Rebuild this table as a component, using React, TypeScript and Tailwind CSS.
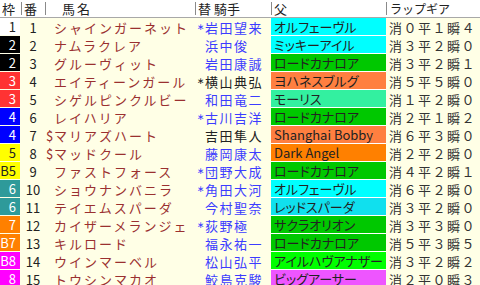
const COLS = "grid grid-cols-[21px_24px_150px_76px_115px_94px]";

type Row = {
  waku: string; wc: string; no: number; mark?: string; name: string;
  star?: boolean; jockey: string; jc: string; sire: string; sc: string; lap: string;
};

const W1 = "bg-white text-[#222]";
const W2 = "bg-black text-white";
const W3 = "bg-[#ff3333] text-white";
const W4 = "bg-[#0000ff] text-white";
const W5 = "bg-[#ffff00] text-[#222]";
const W6 = "bg-[#2e9a9a] text-white";
const W7 = "bg-[#ff8000] text-white";
const W8 = "bg-[#ff00ff] text-white";

const BLUE = "text-[#3c3cff]";
const BLK = "text-[#222]";

const CYAN = "bg-[#00ffff]";
const GREEN = "bg-[#00c800]";
const LIME = "bg-[#00ff00]";
const CORAL = "bg-[#ff7f40]";
const ORANGE = "bg-[#ff8000]";
const MINT = "bg-[#33f0a0]";
const CYAN2 = "bg-[#10e0ee]";
const VIOLET = "bg-[#ee55ff]";

const ROWS: Row[] = [
  { waku: "1", wc: W1, no: 1, name: "シャインガーネット", star: true, jockey: "岩田望来", jc: BLUE, sire: "オルフェーヴル", sc: CYAN, lap: "消０平１瞬４" },
  { waku: "2", wc: W2, no: 2, name: "ナムラクレア", jockey: "浜中俊", jc: BLUE, sire: "ミッキーアイル", sc: CYAN, lap: "消３平２瞬０" },
  { waku: "2", wc: W2, no: 3, name: "グルーヴィット", jockey: "岩田康誠", jc: BLUE, sire: "ロードカナロア", sc: GREEN, lap: "消３平２瞬１" },
  { waku: "3", wc: W3, no: 4, name: "エイティーンガール", star: true, jockey: "横山典弘", jc: BLK, sire: "ヨハネスブルグ", sc: CORAL, lap: "消５平５瞬０" },
  { waku: "3", wc: W3, no: 5, name: "シゲルピンクルビー", jockey: "和田竜二", jc: BLUE, sire: "モーリス", sc: MINT, lap: "消１平２瞬０" },
  { waku: "4", wc: W4, no: 6, name: "レイハリア", star: true, jockey: "古川吉洋", jc: BLUE, sire: "ロードカナロア", sc: GREEN, lap: "消２平１瞬２" },
  { waku: "4", wc: W4, no: 7, mark: "$", name: "マリアズハート", jockey: "吉田隼人", jc: BLK, sire: "Shanghai Bobby", sc: CORAL, lap: "消６平３瞬０" },
  { waku: "5", wc: W5, no: 8, mark: "$", name: "マッドクール", jockey: "藤岡康太", jc: BLUE, sire: "Dark Angel", sc: ORANGE, lap: "消２平２瞬０" },
  { waku: "B5", wc: W5, no: 9, name: "ファストフォース", star: true, jockey: "団野大成", jc: BLUE, sire: "ロードカナロア", sc: GREEN, lap: "消４平２瞬１" },
  { waku: "6", wc: W6, no: 10, name: "ショウナンバニラ", star: true, jockey: "角田大河", jc: BLUE, sire: "オルフェーヴル", sc: CYAN, lap: "消６平２瞬０" },
  { waku: "6", wc: W6, no: 11, name: "テイエムスパーダ", jockey: "今村聖奈", jc: BLUE, sire: "レッドスパーダ", sc: CYAN2, lap: "消３平２瞬０" },
  { waku: "7", wc: W7, no: 12, name: "カイザーメランジェ", star: true, jockey: "荻野極", jc: BLUE, sire: "サクラオリオン", sc: GREEN, lap: "消３平３瞬０" },
  { waku: "B7", wc: W7, no: 13, name: "キルロード", jockey: "福永祐一", jc: BLUE, sire: "ロードカナロア", sc: GREEN, lap: "消５平３瞬５" },
  { waku: "B8", wc: W8, no: 14, name: "ウインマーベル", jockey: "松山弘平", jc: BLUE, sire: "アイルハヴアナザー", sc: LIME, lap: "消３平２瞬２" },
  { waku: "8", wc: W8, no: 15, name: "トウシンマカオ", jockey: "鮫島克駿", jc: BLUE, sire: "ビッグアーサー", sc: VIOLET, lap: "消２平０瞬３" },
];

export default function App() {
  return (
    <div className="w-[480px] h-[285px] overflow-hidden bg-[#ffffe6] font-['Noto_Sans_CJK_JP',sans-serif] leading-none">
      {/* header */}
      <div className={`${COLS} h-[18px] bg-white border-b border-[#a8a8a8] text-[13px] text-[#222]`}>
        <div className="flex items-center pl-[2px]">枠</div>
        <div className="flex items-center pl-[2px] my-[2px] border-l border-[#8a8a8a]">番</div>
        <div className="flex items-center pl-[16px] my-[2px] border-l border-[#8a8a8a] tracking-[2px]">馬名</div>
        <div className="flex items-center pl-[2px] my-[2px] border-l border-[#8a8a8a]">替&nbsp;騎手</div>
        <div className="flex items-center pl-[2px] my-[2px] border-l border-[#8a8a8a]">父</div>
        <div className="flex items-center pl-[3px] my-[2px] border-l border-[#8a8a8a] text-[12px]">ラップギア</div>
      </div>

      {ROWS.map((r) => (
        <div key={r.no} className={`${COLS} h-[18px] text-[13px]`}>
          <div className={`flex items-center justify-end pr-[4px] w-[20px] border-b border-[#ffffe6] ${r.wc}`}>{r.waku}</div>
          <div className="flex items-center justify-center text-[#222]">{r.no}</div>
          <div className="flex items-center text-[#9a3030]">
            <span className="w-[9px] pl-[1px]">{r.mark}</span>
            <span className="tracking-[2px] whitespace-nowrap">{r.name}</span>
          </div>
          <div className={`flex items-center overflow-hidden ${r.jc}`}>
            <span className="w-[10px] shrink-0 pl-[2px] text-[9px] font-['DejaVu_Sans',sans-serif]">{r.star ? "∗" : ""}</span>
            <span className="tracking-[1.5px] whitespace-nowrap">{r.jockey}</span>
          </div>
          <div className={`flex items-center pl-[3px] border-b border-white text-[13px] text-[#222] whitespace-nowrap overflow-hidden [font-feature-settings:'palt'] ${r.sc}`}>
            {r.sire}
          </div>
          <div className="flex items-center pl-[3px] tracking-[1.5px] text-[#333] whitespace-nowrap">{r.lap}</div>
        </div>
      ))}
    </div>
  );
}
